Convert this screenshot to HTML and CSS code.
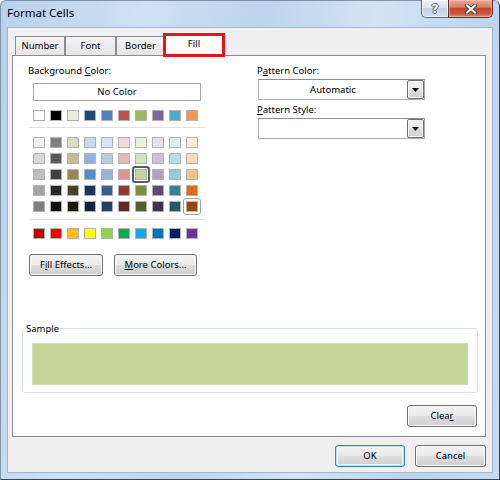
FILE: index.html
```html
<!DOCTYPE html>
<html>
<head>
<meta charset="utf-8">
<title>Format Cells</title>
<link rel="stylesheet" href="styles.css">
</head>
<body>
<div class="window">
  <div class="titlebar">
    <span class="title">Format Cells</span>
    <div class="caption-btns">
      <div class="cbtn help"><span class="qmark">?</span></div>
      <div class="cbtn close">
        <svg width="14" height="10" viewBox="0 0 14 10">
          <path d="M3 1.5 L11 8.5 M11 1.5 L3 8.5" stroke="#4a4a4a" stroke-width="4" stroke-linecap="square" fill="none"/>
          <path d="M3 1.5 L11 8.5 M11 1.5 L3 8.5" stroke="#ffffff" stroke-width="2" stroke-linecap="square" fill="none"/>
        </svg>
      </div>
    </div>
  </div>
  <div class="client">
    <div class="tabs">
      <div class="tab t-number">Number</div>
      <div class="tab t-font">Font</div>
      <div class="tab t-border">Border</div>
      <div class="tab active">Fill</div>
    </div>
    <div class="panel">
      <div class="top">
        <div class="leftcol">
          <div class="label">Background <u>C</u>olor:</div>
          <div class="nocolor">No Color</div>
          <div class="swrow first">
            <span class="sw" style="background:#ffffff"></span>
            <span class="sw" style="background:#000000"></span>
            <span class="sw" style="background:#eeece1"></span>
            <span class="sw" style="background:#1f497d"></span>
            <span class="sw" style="background:#4f81bd"></span>
            <span class="sw" style="background:#c0504d"></span>
            <span class="sw" style="background:#9bbb59"></span>
            <span class="sw" style="background:#8064a2"></span>
            <span class="sw" style="background:#4bacc6"></span>
            <span class="sw" style="background:#f79646"></span>
          </div>
          <div class="sep"></div>
          <div class="swgrid">
            <span class="sw" style="background:#f2f2f2"></span>
            <span class="sw" style="background:#7f7f7f"></span>
            <span class="sw" style="background:#ddd9c3"></span>
            <span class="sw" style="background:#c6d9f0"></span>
            <span class="sw" style="background:#dbe5f1"></span>
            <span class="sw" style="background:#f2dcdb"></span>
            <span class="sw" style="background:#ebf1dd"></span>
            <span class="sw" style="background:#e5e0ec"></span>
            <span class="sw" style="background:#dbeef3"></span>
            <span class="sw" style="background:#fdeada"></span>

            <span class="sw" style="background:#d8d8d8"></span>
            <span class="sw" style="background:#595959"></span>
            <span class="sw" style="background:#c4bd97"></span>
            <span class="sw" style="background:#8db3e2"></span>
            <span class="sw" style="background:#b8cce4"></span>
            <span class="sw" style="background:#e5b9b7"></span>
            <span class="sw" style="background:#d7e3bc"></span>
            <span class="sw" style="background:#ccc1d9"></span>
            <span class="sw" style="background:#b7dde8"></span>
            <span class="sw" style="background:#fbd5b5"></span>

            <span class="sw" style="background:#bfbfbf"></span>
            <span class="sw" style="background:#3f3f3f"></span>
            <span class="sw" style="background:#938953"></span>
            <span class="sw" style="background:#548dd4"></span>
            <span class="sw" style="background:#95b3d7"></span>
            <span class="sw" style="background:#d99694"></span>
            <span class="sw sel" style="background:#c3d69b"></span>
            <span class="sw" style="background:#b2a2c7"></span>
            <span class="sw" style="background:#92cddc"></span>
            <span class="sw" style="background:#fac08f"></span>

            <span class="sw" style="background:#a5a5a5"></span>
            <span class="sw" style="background:#262626"></span>
            <span class="sw" style="background:#494429"></span>
            <span class="sw" style="background:#17365d"></span>
            <span class="sw" style="background:#366092"></span>
            <span class="sw" style="background:#953734"></span>
            <span class="sw" style="background:#76923c"></span>
            <span class="sw" style="background:#5f497a"></span>
            <span class="sw" style="background:#31859b"></span>
            <span class="sw" style="background:#e36c09"></span>

            <span class="sw" style="background:#7f7f7f"></span>
            <span class="sw" style="background:#0c0c0c"></span>
            <span class="sw" style="background:#1d1b10"></span>
            <span class="sw" style="background:#0f243e"></span>
            <span class="sw" style="background:#244061"></span>
            <span class="sw" style="background:#632423"></span>
            <span class="sw" style="background:#4f6128"></span>
            <span class="sw" style="background:#3f3151"></span>
            <span class="sw" style="background:#205867"></span>
            <span class="sw hov" style="background:#974806"></span>
          </div>
          <div class="sep second"></div>
          <div class="swrow std">
            <span class="sw" style="background:#c00000"></span>
            <span class="sw" style="background:#ff0000"></span>
            <span class="sw" style="background:#ffc000"></span>
            <span class="sw" style="background:#ffff00"></span>
            <span class="sw" style="background:#92d050"></span>
            <span class="sw" style="background:#00b050"></span>
            <span class="sw" style="background:#00b0f0"></span>
            <span class="sw" style="background:#0070c0"></span>
            <span class="sw" style="background:#002060"></span>
            <span class="sw" style="background:#7030a0"></span>
          </div>
          <div class="btnrow">
            <div class="btn fill-effects">F<u>i</u>ll Effects...</div>
            <div class="btn more-colors"><u>M</u>ore Colors...</div>
          </div>
        </div>
        <div class="rightcol">
          <div class="label">P<u>a</u>ttern Color:</div>
          <div class="combo">
            <span class="combo-text">Automatic</span>
            <span class="drop"><svg width="7" height="4" viewBox="0 0 7 4"><path d="M0 0 H7 L3.5 4 Z" fill="#000"/></svg></span>
          </div>
          <div class="label second"><u>P</u>attern Style:</div>
          <div class="combo">
            <span class="combo-text"></span>
            <span class="drop"><svg width="7" height="4" viewBox="0 0 7 4"><path d="M0 0 H7 L3.5 4 Z" fill="#000"/></svg></span>
          </div>
        </div>
      </div>
      <fieldset class="sample">
        <legend>Sample</legend>
        <div class="sample-fill"></div>
      </fieldset>
      <div class="clearrow">
        <div class="btn clear">Clea<u>r</u></div>
      </div>
    </div>
    <div class="footer">
      <div class="btn default ok">OK</div>
      <div class="btn cancel">Cancel</div>
    </div>
  </div>
</div>
</body>
</html>
```

FILE: styles.css
```css
* { box-sizing: border-box; }
html, body { margin: 0; padding: 0; }
body {
  width: 500px;
  height: 480px;
  overflow: hidden;
  background: #ffffff;
  font-family: "Noto Sans", "Open Sans", sans-serif;
  font-size: 9.5px;
  color: #000;
}

.window {
  width: 500px;
  height: 480px;
  border: 1px solid #7d93ad;
  border-right-color: #3c4754;
  border-bottom-color: #3c4754;
  border-radius: 6px 6px 0 0;
  background: linear-gradient(100deg, #b9d1ea 0%, #cfe1f4 25%, #bdd4ec 45%, #d3e4f5 65%, #bcd4ed 85%, #c7dcf1 100%);
  padding: 0 6px 6px 6px;
  display: flex;
  flex-direction: column;
}

.titlebar {
  height: 26px;
  display: flex;
  justify-content: space-between;
  align-items: flex-start;
  flex: none;
}
.title {
  font-size: 11.5px;
  line-height: 14px;
  padding-top: 5px;
  color: #000;
}
.caption-btns {
  display: flex;
  margin-top: -1px;
}
.cbtn {
  height: 18px;
  display: flex;
  align-items: center;
  justify-content: center;
  border: 1px solid #56698a;
  border-top: none;
}
.help {
  width: 27px;
  border-right: none;
  border-radius: 0 0 0 5px;
  background: linear-gradient(#eef3f9 0%, #d9e3ef 45%, #c3d2e4 50%, #d2e0ef 100%);
  box-shadow: inset 0 0 0 1px rgba(255,255,255,0.6);
}
.qmark {
  font-family: "DejaVu Sans", sans-serif;
  font-weight: bold;
  font-size: 12px;
  line-height: 12px;
  color: #ffffff;
  text-shadow: 1px 0 0 #5a5f66, -1px 0 0 #5a5f66, 0 1px 0 #5a5f66, 0 -1px 0 #5a5f66;
}
.close {
  width: 45px;
  border-color: #6b2a1f;
  border-radius: 0 0 5px 0;
  background: linear-gradient(#e8a797 0%, #d98472 40%, #c4462d 50%, #c95a3f 80%, #dd8a6b 100%);
  box-shadow: inset 0 0 0 1px rgba(255,220,210,0.45);
}

.client {
  flex: 1;
  background: #f0f0f0;
  border: 1px solid #a3b5ca;
  padding: 6px 6px 0 4px;
  display: flex;
  flex-direction: column;
}

.tabs {
  height: 21px;
  display: flex;
  align-items: flex-end;
  padding-left: 3px;
}
.tab {
  height: 19px;
  border: 1px solid #898c95;
  border-bottom: none;
  background: linear-gradient(#f5f5f5, #e4e4e4);
  text-align: center;
  line-height: 17px;
}
.t-number { width: 50px; }
.t-font { width: 51px; }
.t-border { width: 49px; }
.tab.active {
  width: 60px;
  height: 22px;
  margin: 0 0 -1px -1px;
  background: #ffffff;
  position: relative;
  z-index: 1;
  line-height: 18px;
  outline: 3px solid #e8131c;
  outline-offset: -2px;
}

.panel {
  height: 382px;
  flex: none;
  background: #ffffff;
  border: 1px solid #898c95;
  display: flex;
  flex-direction: column;
}

.top {
  display: flex;
  padding: 7px 0 0 15px;
}
.leftcol { width: 229px; }
.label { line-height: 15px; }
.label.second { margin-top: 2px; }
u { text-decoration: underline; text-underline-offset: 1px; }

.nocolor {
  width: 168px;
  height: 18px;
  margin: 5px 0 0 5px;
  border: 1px solid #a9a9a9;
  background: #ffffff;
  text-align: center;
  line-height: 16px;
}

.sw {
  display: block;
  width: 12px;
  height: 11px;
  border: 1px solid #b3b3b3;
  position: relative;
}
.swrow {
  display: flex;
  gap: 5px;
  margin-left: 5px;
}
.swrow.first { margin-top: 9px; }
.swrow.std { margin-top: 8px; }
.sep {
  width: 176px;
  height: 1px;
  background: #e2e2e2;
  margin: 6px 0 0 1px;
}
.sep.second { margin-top: 7px; }
.swgrid {
  display: grid;
  grid-template-columns: repeat(10, 12px);
  column-gap: 5px;
  row-gap: 5px;
  margin: 9px 0 0 5px;
}
.sw.sel::after {
  content: "";
  position: absolute;
  left: -4px; top: -4px; right: -4px; bottom: -4px;
  border: 2px solid #5c5c5c;
  border-radius: 3px;
}
.sw.hov::after {
  content: "";
  position: absolute;
  left: -4px; top: -4px; right: -4px; bottom: -4px;
  border: 1px solid #a2a2a2;
  border-radius: 3px;
}

.btn {
  height: 22px;
  border: 1px solid #707070;
  border-radius: 3px;
  background: linear-gradient(#f2f2f2 0%, #ebebeb 48%, #dddddd 52%, #cfcfcf 100%);
  box-shadow: inset 0 0 0 1px #fbfbfb;
  display: flex;
  align-items: center;
  justify-content: center;
  line-height: 14px;
}
.btnrow {
  display: flex;
  gap: 11px;
  margin: 15px 0 0 1px;
}
.fill-effects { width: 74px; }
.more-colors { width: 83px; }

.rightcol { width: 170px; }
.combo {
  width: 167px;
  height: 21px;
  margin: 1px 0 0 1px;
  border: 1px solid #abadb3;
  border-top-color: #8e9097;
  background: #ffffff;
  display: flex;
  align-items: center;
}
.combo-text {
  flex: 1;
  text-align: center;
}
.drop {
  width: 17px;
  height: 19px;
  border: 1px solid #707070;
  border-radius: 2px;
  background: linear-gradient(#f2f2f2 0%, #ebebeb 48%, #dddddd 52%, #cfcfcf 100%);
  box-shadow: inset 0 0 0 1px #fbfbfb;
  display: flex;
  align-items: center;
  justify-content: center;
}

.sample {
  margin: 46px 7px 0 9px;
  padding: 8px 9px 7px 9px;
  border: 1px solid #d5dfe5;
  border-radius: 3px;
  min-width: 0;
}
.sample legend {
  padding: 0;
  margin-left: -6px;
  line-height: 13px;
}
.sample-fill {
  height: 42px;
  background: #c4d79b;
  border: 1px solid #cfdeae;
}

.clearrow {
  display: flex;
  justify-content: flex-end;
  margin: 12px 8px 0 0;
}
.clear { width: 70px; }

.footer {
  display: flex;
  justify-content: flex-end;
  gap: 10px;
  margin-top: 8px;
  padding-right: 0;
}
.ok { width: 70px; }
.cancel { width: 71px; }
.btn.default {
  border-color: #3c7fb1;
  box-shadow: inset 0 0 0 1px #bfe3f7, inset 0 0 0 2px #eaf6fd;
}
```
